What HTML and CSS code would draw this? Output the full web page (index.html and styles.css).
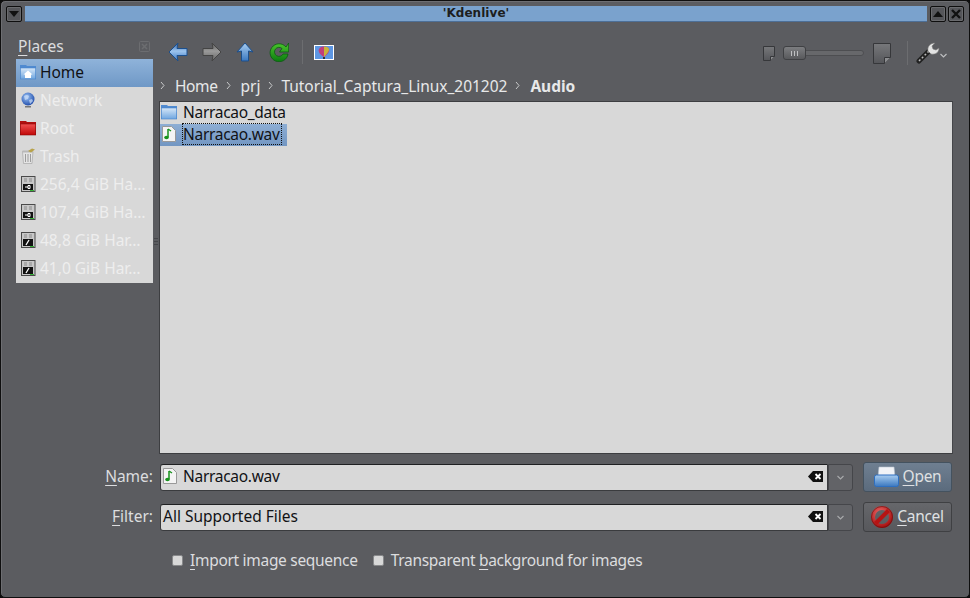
FILE: index.html
```html
<!DOCTYPE html>
<html lang="en">
<head>
<meta charset="utf-8">
<title>Kdenlive</title>
<link rel="stylesheet" href="styles.css">
</head>
<body>
<svg class="defs" width="0" height="0" aria-hidden="true">
  <defs>
    <linearGradient id="blue" x1="0" y1="0" x2="0" y2="1"><stop offset="0" stop-color="#a9cdf0"/><stop offset="1" stop-color="#3a78c0"/></linearGradient>
    <linearGradient id="arrow" x1="0" y1="0" x2="0" y2="1"><stop offset="0" stop-color="#2f62a8"/><stop offset=".45" stop-color="#9cc4ee"/><stop offset="1" stop-color="#3b78c4"/></linearGradient>
    <linearGradient id="grey" x1="0" y1="0" x2="0" y2="1"><stop offset="0" stop-color="#5a5a5a"/><stop offset=".45" stop-color="#9a9a9a"/><stop offset="1" stop-color="#666"/></linearGradient>
    <linearGradient id="green" x1="0" y1="0" x2="0" y2="1"><stop offset="0" stop-color="#4cc62c"/><stop offset="1" stop-color="#0a7a10"/></linearGradient>
    <linearGradient id="folder" x1="0" y1="0" x2="0" y2="1"><stop offset="0" stop-color="#d5e6f7"/><stop offset="1" stop-color="#6fa6e0"/></linearGradient>
    <linearGradient id="redf" x1="0" y1="0" x2="0" y2="1"><stop offset="0" stop-color="#f05050"/><stop offset="1" stop-color="#c00808"/></linearGradient>
    <linearGradient id="page" x1="0" y1="0" x2="0" y2="1"><stop offset="0" stop-color="#77787b"/><stop offset="1" stop-color="#55565a"/></linearGradient>
    <radialGradient id="globe" cx=".4" cy=".35" r=".7"><stop offset="0" stop-color="#9cc4f5"/><stop offset="1" stop-color="#1b48a8"/></radialGradient>
    <radialGradient id="stop" cx=".4" cy=".3" r=".8"><stop offset="0" stop-color="#f06a6a"/><stop offset="1" stop-color="#a50d0d"/></radialGradient>
  </defs>
</svg>
<div class="window">
  <header class="titlebar">
    <div class="wbtn"><svg width="10" height="6" viewBox="0 0 10 6"><path d="M0 0h10L5 6z" fill="#111"/></svg></div>
    <div class="wtitle">'Kdenlive'</div>
    <div class="wbtn"><svg width="10" height="6" viewBox="0 0 10 6"><path d="M0 6h10L5 0z" fill="#111"/></svg></div>
    <div class="wbtn"><svg width="10" height="10" viewBox="0 0 10 10"><path d="M1 1l8 8M9 1l-8 8" stroke="#111" stroke-width="2.400"/></svg></div>
  </header>

  <div class="content">
    <aside class="places">
      <div class="places-head">
        <span class="places-label"><u>P</u>laces</span>
        <svg class="places-close" width="11" height="11" viewBox="0 0 11 11"><rect x=".5" y=".5" width="10" height="10" rx="1" fill="none" stroke="#6c6d70"/><path d="M3 3l5 5M8 3l-5 5" stroke="#6c6d70" stroke-width="1.600"/></svg>
      </div>
      <ul class="place-list">
        <li class="place active">
          <svg width="16" height="16" viewBox="0 0 16 16"><path d="M0 1h6l1 1h9v13H0z" fill="#4f8ad0"/><rect x=".3" y="4" width="15.400" height="11" fill="url(#folder)" stroke="#4a86cc" stroke-width=".6"/><path d="M3.500 10.500L8 6.500l4.500 4H11V14H5v-3.500z" fill="#fff"/></svg>
          <span>Home</span>
        </li>
        <li class="place">
          <svg width="16" height="16" viewBox="0 0 16 16"><circle cx="8" cy="7" r="6.500" fill="url(#globe)"/><path d="M4 4q3-2 5 0l-1 3-3 1zM9 8l3-1 1 2-3 3z" fill="#cfe0f8" opacity=".7"/><rect x="5" y="14" width="6" height="1.500" fill="#777"/></svg>
          <span>Network</span>
        </li>
        <li class="place">
          <svg width="16" height="16" viewBox="0 0 16 16"><path d="M0 1h6l1 1h9v13H0z" fill="#b00f0f"/><rect x=".3" y="4" width="15.400" height="11" fill="url(#redf)" stroke="#8e0c0c" stroke-width=".6"/></svg>
          <span>Root</span>
        </li>
        <li class="place">
          <svg width="16" height="16" viewBox="0 0 16 16"><path d="M2.500 3.500h10.500l-1 12H3.500z" fill="#e4e4e4" stroke="#a8a8a8" stroke-width=".7"/><path d="M5.500 6v8M8 6v8M10.500 6v8" stroke="#9c9c9c"/><path d="M2.500 2.500h10.500v2H2.500z" fill="#b8b8b8"/><path d="M8 3l4-2.500 3 1-4 3z" fill="#b8a24a"/></svg>
          <span>Trash</span>
        </li>
        <li class="place">
          <svg class="disk" width="15" height="16" viewBox="0 0 15 16"><rect x=".5" y=".5" width="13.500" height="15" fill="#c8c8c8" stroke="#4a4a4a"/><path d="M3 3h3M8 3h3M3 5h3M8 5h3" stroke="#8a8a8a"/><rect x="2" y="8" width="10" height="6" fill="#111"/><path d="M4 11h3M7 9.500h2v3H7z" stroke="#fff" fill="none"/><rect x="9" y="14" width="4" height="1" fill="#37b437"/></svg>
          <span>256,4 GiB Ha…</span>
        </li>
        <li class="place">
          <svg class="disk" width="15" height="16" viewBox="0 0 15 16"><rect x=".5" y=".5" width="13.500" height="15" fill="#c8c8c8" stroke="#4a4a4a"/><path d="M3 3h3M8 3h3M3 5h3M8 5h3" stroke="#8a8a8a"/><rect x="2" y="8" width="10" height="6" fill="#111"/><path d="M4 11h3M7 9.500h2v3H7z" stroke="#fff" fill="none"/><rect x="9" y="14" width="4" height="1" fill="#37b437"/></svg>
          <span>107,4 GiB Ha…</span>
        </li>
        <li class="place">
          <svg class="disk" width="15" height="16" viewBox="0 0 15 16"><rect x=".5" y=".5" width="13.500" height="15" fill="#c8c8c8" stroke="#4a4a4a"/><path d="M3 3h3M8 3h3M3 5h3M8 5h3" stroke="#8a8a8a"/><rect x="2" y="7" width="10" height="7" fill="#111"/><path d="M5 13l3-5" stroke="#fff" stroke-width="1.300"/><rect x="9" y="14" width="4" height="1" fill="#37b437"/></svg>
          <span>48,8 GiB Har…</span>
        </li>
        <li class="place">
          <svg class="disk" width="15" height="16" viewBox="0 0 15 16"><rect x=".5" y=".5" width="13.500" height="15" fill="#c8c8c8" stroke="#4a4a4a"/><path d="M3 3h3M8 3h3M3 5h3M8 5h3" stroke="#8a8a8a"/><rect x="2" y="7" width="10" height="7" fill="#111"/><path d="M5 13l3-5" stroke="#fff" stroke-width="1.300"/><rect x="9" y="14" width="4" height="1" fill="#37b437"/></svg>
          <span>41,0 GiB Har…</span>
        </li>
      </ul>
    </aside>

    <div class="splitter"><span class="grip"></span></div>

    <main class="browser">
      <div class="toolbar">
        <div class="tool-left">
          <svg width="20" height="20" viewBox="0 0 20 20"><path d="M10 1L1 10l9 9-1-5.500h10v-7H9z" fill="url(#arrow)" stroke="#1c4f8c" stroke-linejoin="round"/></svg>
          <svg width="20" height="20" viewBox="0 0 20 20"><path d="M10 1l9 9-9 9 1-5.500H1v-7h10z" fill="url(#grey)" stroke="#444" stroke-linejoin="round"/></svg>
          <svg width="18" height="20" viewBox="0 0 18 20"><path d="M9 1L1 10l4.500-1v10h7V9L17 10z" fill="url(#blue)" stroke="#1c4f8c" stroke-linejoin="round"/></svg>
          <svg width="20" height="20" viewBox="0 0 20 20"><path d="M17 5A9 9 0 1 0 19 12H14A4.500 4.500 0 1 1 13 6.500L10.500 10H19.700V1z" fill="url(#green)" stroke="#0a5c10" stroke-width=".8"/></svg>
          <span class="vsep"></span>
          <svg width="20" height="15" viewBox="0 0 20 15"><rect x=".5" y=".5" width="19" height="14" fill="#3f7fd8" stroke="#fff"/><rect x="1" y="1" width="18" height="13" fill="#5d96e2"/><path d="M10 12c-5-3-6-6-5-8s3-2.500 5-2.500 4 .5 5 2.500-1 5-5 8z" fill="#c23f7a"/><path d="M10 1.500c3 0 5 1 5 3s-2 4-5 7.500z" fill="#c9b23a"/><rect x="9" y="12" width="2" height="2" fill="#333"/></svg>
        </div>
        <div class="tool-right">
          <svg class="page-s" width="12" height="15" viewBox="0 0 12 15"><path d="M.5.500h11v10l-4 4h-7z" fill="url(#page)" stroke="#36373a"/><path d="M7.500 14.500v-4h4" fill="#8c8d90" stroke="#36373a"/></svg>
          <div class="slider"><span class="handle"><i></i><i></i><i></i></span></div>
          <svg class="page-l" width="18" height="21" viewBox="0 0 18 21"><path d="M.5.500h17v14l-6 6H.5z" fill="url(#page)" stroke="#36373a"/><path d="M11.500 20.500v-6h6" fill="#8c8d90" stroke="#36373a"/></svg>
          <span class="vsep right"></span>
          <svg width="24" height="22" viewBox="0 0 24 22"><path d="M3 19L14 8" stroke="#222" stroke-width="5" stroke-linecap="round"/><path d="M3 19L13 9" stroke="#bbb" stroke-width="1.500" stroke-dasharray="2 2"/><path d="M12 9c-1-4 2-8 7-8l-3 3 1 3 3 1 3-2c0 4-3 7-8 6z" fill="#e3e3e3" stroke="#777" stroke-width=".6"/></svg>
          <svg class="chev" width="7" height="5" viewBox="0 0 7 5"><path d="M.5 1L3.500 4 6.500 1" fill="none" stroke="#bdbec0" stroke-width="1.200"/></svg>
        </div>
      </div>

      <nav class="crumbs">
        <svg class="sep" width="5" height="9" viewBox="0 0 5 9"><path d="M1 1l3 3.500L1 8" fill="none" stroke="#c9cacb"/></svg>
        <span class="crumb-home">Home</span>
        <svg class="sep" width="5" height="9" viewBox="0 0 5 9"><path d="M1 1l3 3.500L1 8" fill="none" stroke="#c9cacb"/></svg>
        <span>prj</span>
        <svg class="sep" width="5" height="9" viewBox="0 0 5 9"><path d="M1 1l3 3.500L1 8" fill="none" stroke="#c9cacb"/></svg>
        <span class="crumb-long">Tutorial_Captura_Linux_201202</span>
        <svg class="sep" width="5" height="9" viewBox="0 0 5 9"><path d="M1 1l3 3.500L1 8" fill="none" stroke="#c9cacb"/></svg>
        <strong>Audio</strong>
      </nav>

      <div class="files">
        <div class="file">
          <svg class="icon-folder" width="16" height="16" viewBox="0 0 16 16"><path d="M0 1h6l1 1h9v13H0z" fill="#4f8ad0"/><rect x=".3" y="4" width="15.400" height="11" fill="url(#folder)" stroke="#4a86cc" stroke-width=".6"/></svg>
          <span class="fname">Narracao_data</span>
        </div>
        <div class="file selected">
          <svg class="icon-doc" width="14" height="16" viewBox="0 0 14 16"><path d="M.5.500h9l4 4v11h-13z" fill="#f4f4f4" stroke="#999"/><path d="M6 3v8" stroke="#17921c" stroke-width="1.500"/><path d="M6 3l3 2" stroke="#17921c" stroke-width="1.300"/><ellipse cx="4.500" cy="11.500" rx="2.300" ry="1.800" fill="#17921c"/></svg>
          <span class="fname focus">Narracao.wav</span>
        </div>
      </div>
    </main>
  </div>

  <section class="form">
    <div class="form-row">
      <label class="flabel"><u>N</u>ame:</label>
      <div class="field">
        <svg class="fileicon" width="14" height="16" viewBox="0 0 14 16"><path d="M.5.500h9l4 4v11h-13z" fill="#f4f4f4" stroke="#999"/><path d="M6 3v8" stroke="#17921c" stroke-width="1.500"/><path d="M6 3l3 2" stroke="#17921c" stroke-width="1.300"/><ellipse cx="4.500" cy="11.500" rx="2.300" ry="1.800" fill="#17921c"/></svg>
        <span class="fvalue tight">Narracao.wav</span>
        <svg class="clear" width="15" height="11" viewBox="0 0 15 11"><path d="M5 0h10v11H5L0 5.500z" fill="#111"/><path d="M7.500 3l5 5M12.500 3l-5 5" stroke="#fff" stroke-width="1.800"/></svg>
      </div>
      <div class="combo"><svg width="7" height="5" viewBox="0 0 7 5"><path d="M.5 1L3.500 4 6.500 1" fill="none" stroke="#a9aaac" stroke-width="1.100"/></svg></div>
      <button class="btn primary" type="button">
        <svg width="25" height="21" viewBox="0 0 25 21"><path d="M5 1h15l1 10H4z" fill="#f1f3f7" stroke="#b9c3d0" stroke-width=".6"/><rect x=".5" y="9" width="24" height="11.500" rx="2" fill="url(#blue)" stroke="#2e6fc0"/></svg>
        <span><u>O</u>pen</span>
      </button>
    </div>
    <div class="form-row">
      <label class="flabel"><u>F</u>ilter:</label>
      <div class="field">
        <span class="fvalue">All Supported Files</span>
        <svg class="clear" width="15" height="11" viewBox="0 0 15 11"><path d="M5 0h10v11H5L0 5.500z" fill="#111"/><path d="M7.500 3l5 5M12.500 3l-5 5" stroke="#fff" stroke-width="1.800"/></svg>
      </div>
      <div class="combo"><svg width="7" height="5" viewBox="0 0 7 5"><path d="M.5 1L3.500 4 6.500 1" fill="none" stroke="#a9aaac" stroke-width="1.100"/></svg></div>
      <button class="btn" type="button">
        <svg width="22" height="22" viewBox="0 0 22 22"><circle cx="11" cy="11" r="9" fill="none" stroke="url(#stop)" stroke-width="4"/><path d="M4.500 17.500l13-13" stroke="#b51414" stroke-width="4"/><circle cx="11" cy="11" r="10.500" fill="none" stroke="#5e1212" stroke-width=".6"/></svg>
        <span><u>C</u>ancel</span>
      </button>
    </div>
    <div class="options">
      <label class="check"><span class="box"></span><span><u>I</u>mport image sequence</span></label>
      <label class="check"><span class="box"></span><span>Transparent <u>b</u>ackground for images</span></label>
    </div>
  </section>
</div>
</body>
</html>
```

FILE: styles.css
```css
* { box-sizing: border-box; }
html, body { margin: 0; padding: 0; }
body { width: 970px; height: 598px; overflow: hidden; background: #0c0c0c; font-family: "Noto Sans", "Open Sans", sans-serif; font-size: 15.5px; color: #e4e5e6; }
.defs { position: absolute; }
u { text-decoration-thickness: 1px; text-underline-offset: 3px; }

.window { width: 970px; height: 598px; display: flex; flex-direction: column; background: #5b5c60; border: 1px solid #0f0f0f; border-radius: 5px; box-shadow: inset 1px 1px 0 #6d6e72; }

.titlebar { display: flex; align-items: center; gap: 2px; padding: 4px 5px 0 5px; height: 21px; }
.wbtn { width: 16px; height: 16px; flex: none; display: flex; align-items: center; justify-content: center; background: #55565a; border: 1px solid #0e0e0e; border-radius: 2px; box-shadow: inset 0 0 0 1px #6a6b6e; }
.wtitle { flex: 1; height: 16px; margin: 0 1px; background: #7aa2cd; border-bottom: 1px solid #4d6f97; text-align: center; font: bold 12px/15px "DejaVu Sans", sans-serif; letter-spacing: .05px; color: #1d1e20; }

.content { display: flex; height: 432px; padding: 0 16px 0 15px; }
.places { width: 137px; flex: none; }
.places-head { height: 37px; padding: 14px 3px 0 2px; display: flex; justify-content: space-between; align-items: flex-start; }
.places-label { line-height: 20px; color: #dcdddf; }
.places-close { margin-top: 5px; }
.place-list { list-style: none; margin: 0; padding: 0; background: #d8d8d8; }
.place { height: 28px; display: flex; align-items: center; gap: 4px; padding: 0 0 2px 4px; color: #eeeeee; white-space: nowrap; }
.place svg { flex: none; }
.place .disk { margin-left: 1px; }
.place.active { background: linear-gradient(#8fb3da, #6f98c6); color: #101114; }

.splitter { width: 6px; flex: none; display: flex; align-items: center; justify-content: center; padding-top: 6px; }
.grip { display: block; width: 4px; height: 7px; background: repeating-linear-gradient(#45464a 0 1px, transparent 1px 3px); }

.browser { flex: 1; display: flex; flex-direction: column; min-width: 0; }
.toolbar { height: 50px; padding: 10px 6px 0 9px; display: flex; justify-content: space-between; align-items: center; }
.tool-left { display: flex; align-items: center; gap: 14px; }
.tool-left svg:nth-child(3) { margin-right: 1px; }
.vsep { width: 1px; height: 24px; background: #6c6d70; margin: 0 -3px 0 -1px; }
.tool-right { display: flex; align-items: center; margin-top: 2px; }
.page-s { margin-right: 8px; }
.page-l { margin-left: 9px; }
.vsep.right { margin: 0 8px 0 16px; }
.chev { margin: 5px 0 0 0; }
.slider { width: 81px; height: 6px; border-radius: 3px; background: #67686b; border: 1px solid #4d4e51; display: flex; align-items: center; }
.handle { width: 23px; height: 14px; flex: none; margin-left: -1px; background: linear-gradient(#7c7d80, #58595c); border: 1px solid #3f4043; border-radius: 3px; display: flex; align-items: center; justify-content: center; gap: 2px; }
.handle i { width: 1px; height: 5px; background: #bfc0c2; }

.crumbs { height: 29px; display: flex; align-items: center; padding: 0 0 2px 1px; color: #e7e8e9; white-space: nowrap; }
.crumbs .sep { margin: 0 10px 0 0; flex: none; }
.crumbs span, .crumbs strong { margin-right: 8px; }
.crumbs strong { font-weight: 700; }
.crumb-home { letter-spacing: -.4px; }
.crumbs .crumb-long { letter-spacing: -.03px; margin-left: -2px; }

.files { height: 353px; background: #d8d8d8; border: 1px solid #3d3e41; border-right-color: #45464a; color: #111215; }
.file { height: 22px; display: flex; align-items: center; padding: 0 0 2px 1px; }
.file svg { flex: none; }
.icon-folder { margin-right: 6px; }
.icon-doc { margin: 0 7px 0 1px; }
.file.selected { width: 127px; background: linear-gradient(#8eaed4, #7296c2); }
.fname { line-height: 20px; letter-spacing: -.3px; }
.focus { outline: 1px dotted #111; outline-offset: 0; padding: 0 2px 0 0; }

.form { display: flex; flex-direction: column; padding: 8px 17px 0 15px; }
.form-row { display: flex; align-items: center; height: 30px; margin-bottom: 10px; }
.flabel { width: 137px; flex: none; text-align: right; color: #dcdddf; padding-bottom: 3px; }
.field { margin-left: 7px; flex: none; width: 668px; height: 27px; display: flex; align-items: center; gap: 6px; padding: 0 2px 3px 2px; background: #d8d8d8; border: 1px solid #3a3b3e; border-top-color: #1f2022; border-radius: 3px 0 0 3px; color: #111215; }
.fileicon { flex: none; }
.fvalue { flex: 1; }
.tight { letter-spacing: -.3px; }
.clear { flex: none; margin: 2px 2px 0 0; }
.combo { width: 25px; height: 27px; flex: none; display: flex; align-items: center; justify-content: center; background: #626367; border: 1px solid #45464a; border-radius: 0 3px 3px 0; }
.btn { margin-left: 10px; width: 89px; height: 30px; flex: none; display: flex; align-items: center; justify-content: center; gap: 4px; padding: 0 0 3px; font: inherit; letter-spacing: -.3px; color: #dfe0e2; background: linear-gradient(#66676b, #57585c); border: 1px solid #3f4043; border-radius: 3px; }
.btn svg { margin-top: 2px; }
.btn.primary { background: linear-gradient(#6f7f91, #5b6b7d); border-color: #44525f; }

.options { display: flex; gap: 15px; padding: 8px 0 0 156px; }
.check { display: flex; align-items: center; gap: 7px; color: #dcdddf; line-height: 20px; letter-spacing: -.3px; }
.box { width: 11px; height: 11px; flex: none; background: #d8d8d8; border-radius: 2px; border: 1px solid #88898b; }
```
